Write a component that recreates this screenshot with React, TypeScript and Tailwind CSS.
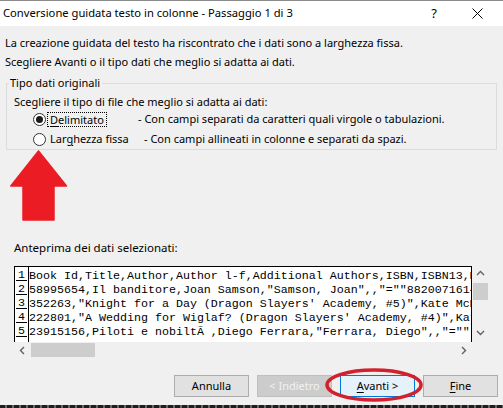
import React from "react";

const ui = { fontFamily: '"Noto Sans", "Liberation Sans", Arial, sans-serif' };
const mono = { fontFamily: '"Liberation Mono", "Courier New", monospace' };

function Radio({ checked }: { checked?: boolean }) {
  return (
    <span className="w-[13px] h-[13px] rounded-full border border-[#333333] bg-white flex items-center justify-center shrink-0">
      {checked && <span className="w-[7px] h-[7px] rounded-full bg-[#1a1a1a]" />}
    </span>
  );
}

function Chevron({ dir }: { dir: "up" | "down" | "left" | "right" }) {
  const paths: Record<string, string> = {
    up: "M1 6 L4.5 2.5 L8 6",
    down: "M1 3 L4.5 6.5 L8 3",
    left: "M6 1 L2.5 4.5 L6 8",
    right: "M3 1 L6.5 4.5 L3 8",
  };
  return (
    <svg width="9" height="9" viewBox="0 0 9 9">
      <path d={paths[dir]} fill="none" stroke="#606060" strokeWidth="1.4" />
    </svg>
  );
}

const rows = [
  "Book Id,Title,Author,Author l-f,Additional Authors,ISBN,ISBN13,My Rating,Average Rating",
  '58995654,Il banditore,Joan Samson,"Samson, Joan",,"=""8820071614"""',
  '352263,"Knight for a Day (Dragon Slayers\' Academy, #5)",Kate McMullan',
  '222801,"A Wedding for Wiglaf? (Dragon Slayers\' Academy, #4)",Kate McMullan',
  '23915156,Piloti e nobiltÃ ,Diego Ferrara,"Ferrara, Diego",,"="""',
  "",
];

export default function App() {
  return (
    <div className="relative w-[503px] h-[408px] bg-[#f0f0f0] overflow-hidden flex flex-col text-[11px] text-black" style={ui}>
      {/* Title bar */}
      <div className="h-[26px] bg-white border-t border-[#8a8a8a] flex items-center shrink-0">
        <span className="pl-[3px] text-[11.2px]">Conversione guidata testo in colonne - Passaggio 1 di 3</span>
        <span className="ml-auto text-[13px] mr-[35px]">?</span>
        <svg width="11" height="11" viewBox="0 0 11 11" className="mr-[20px]">
          <path d="M0.5 0.5 L10.5 10.5 M10.5 0.5 L0.5 10.5" stroke="#000" strokeWidth="1" />
        </svg>
      </div>

      <div className="pt-[7px] pl-[5px]">
        <div className="h-[19px] leading-[19px]">La creazione guidata del testo ha riscontrato che i dati sono a larghezza fissa.</div>
        <div className="h-[19px] leading-[19px]">Scegliere Avanti o il tipo dati che meglio si adatta ai dati.</div>
      </div>

      <fieldset className="mx-[6px] mt-[4px] border border-[#dcdcdc]">
        <legend className="ml-[2px] pl-[1px] pr-[2px] h-[16px] leading-[16px]">Tipo dati originali</legend>
        <div className="mt-[3px] pl-[7px] h-[15px] leading-[15px]">Scegliere il tipo di file che meglio si adatta ai dati:</div>
        <div className="h-[20px] flex items-center pl-[26px]">
          <Radio checked />
          <span className="w-[92px] pl-[1px] flex shrink-0">
            <span className="border border-dotted border-black px-[2px] h-[15px] leading-[13px]">
              <span className="underline underline-offset-2">D</span>elimitato
            </span>
          </span>
          <span className="whitespace-nowrap">- Con campi separati da caratteri quali virgole o tabulazioni.</span>
        </div>
        <div className="h-[20px] flex items-center pl-[26px]">
          <Radio />
          <span className="w-[98px] pl-[4px] shrink-0">
            Lar<span className="underline underline-offset-2">g</span>hezza fissa
          </span>
          <span className="whitespace-nowrap">- Con campi allineati in colonne e separati da spazi.</span>
        </div>
      </fieldset>

      {/* red arrow */}
      <svg width="58" height="71" viewBox="0 0 58 71" className="ml-[10px] shrink-0">
        <path
          d="M28.5 1 L56.5 36 L44 36 L44 70 L13 70 L13 36 L0.8 36 Z"
          fill="#ec1c24"
          stroke="#ec1c24"
          strokeWidth="1.5"
          strokeLinejoin="round"
        />
      </svg>

      <div className="mt-[19px] ml-[14px] h-[16px] leading-[16px] text-[11.5px]">Anteprima dei dati selezionati:</div>

      {/* preview */}
      <div className="mt-[10px] ml-[14px] w-[475px]">
        <div className="flex">
          <div className="w-[458px] h-[76px] border-t border-l border-r border-black bg-white flex overflow-hidden" style={mono}>
            <div className="w-[14px] shrink-0 border-r border-black pt-[2px]">
              {rows.map((_, i) => (
                <div key={i} className="h-[14px] flex items-start">
                  <span className="ml-[1px] w-[11px] h-[12px] border-b border-black text-[11.67px] leading-[13px] pl-[2px]">
                    {i < 5 ? i + 1 : ""}
                  </span>
                </div>
              ))}
            </div>
            <div className="flex-1 overflow-hidden pt-[2px]">
              {rows.map((r, i) => (
                <div key={i} className="h-[14px] leading-[14px] text-[11.67px] whitespace-pre">{r}</div>
              ))}
            </div>
          </div>
          <div className="w-[17px] h-[76px] flex flex-col items-center">
            <div className="h-[15px] flex items-center justify-center"><Chevron dir="up" /></div>
            <div className="w-[15px] h-[17px] bg-[#cdcdcd] mt-[2px]" />
            <div className="mt-auto h-[15px] flex items-center justify-center mb-[2px]"><Chevron dir="down" /></div>
          </div>
        </div>
        <div className="w-[458px] h-[16px] flex items-center">
          <div className="w-[17px] flex justify-center"><Chevron dir="left" /></div>
          <div className="w-[64px] h-[14px] bg-[#cdcdcd]" />
          <div className="ml-auto w-[17px] flex justify-center"><Chevron dir="right" /></div>
        </div>
      </div>

      {/* buttons */}
      <div className="mt-[17px] flex justify-end gap-[8px] pr-[5px]">
        <button className="w-[75px] h-[22px] bg-[#e1e1e1] border border-[#adadad] text-[11px]">Annulla</button>
        <button className="w-[75px] h-[22px] bg-[#cccccc] border border-[#bfbfbf] text-[11px] text-[#f2f2f2]">&lt; Indietro</button>
        <button className="w-[75px] h-[22px] bg-[#e5f1fb] border border-[#0078d7] text-[11px]">
          <span className="underline underline-offset-2">A</span>vanti &gt;
        </button>
        <button className="w-[75px] h-[22px] bg-[#e1e1e1] border border-[#adadad] text-[11px]">
          <span className="underline underline-offset-2">F</span>ine
        </button>
      </div>

      <div className="mt-auto h-[3px] bg-[repeating-linear-gradient(90deg,#1e1e1e_0px,#1e1e1e_5px,#6a6a6a_5px,#6a6a6a_7px)]" />

      {/* red ellipse annotation */}
      <svg width="100" height="36" viewBox="0 0 100 36" className="absolute left-[324px] top-[367px] pointer-events-none">
        <ellipse cx="50" cy="18" rx="47" ry="15" fill="none" stroke="#d2202c" strokeWidth="3.5" />
      </svg>
    </div>
  );
}
